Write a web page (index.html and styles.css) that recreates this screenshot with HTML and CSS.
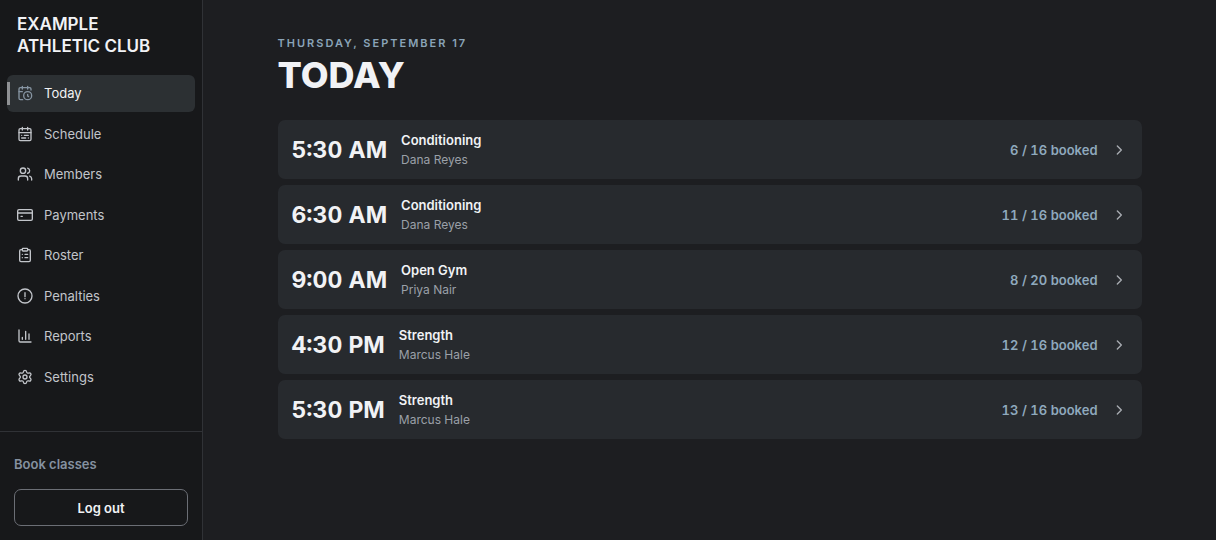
FILE: index.html
```html
<!DOCTYPE html>
<html lang="en">
<head>
  <meta charset="UTF-8">
  <meta name="viewport" content="width=device-width, initial-scale=1.0">
  <title>Today | Example Athletic Club</title>
  <link rel="stylesheet" href="styles.css">
</head>
<body>
  <aside class="sidebar">
    <div class="brand">Example<br>Athletic Club</div>

    <nav class="nav">
      <a href="#today" class="nav-item active" aria-current="page">
        <svg class="icon" viewBox="0 0 24 24"><path d="M21 7.5V6a2 2 0 0 0-2-2H5a2 2 0 0 0-2 2v14a2 2 0 0 0 2 2h3.5"/><path d="M16 2v4M8 2v4M3 10h5"/><circle cx="16" cy="16" r="6"/><path d="M17.5 17.5 16 16.3V14"/></svg>
        Today
      </a>
      <a href="#schedule" class="nav-item">
        <svg class="icon" viewBox="0 0 24 24"><rect x="3" y="4" width="18" height="18" rx="2"/><path d="M16 2v4M8 2v4M3 10h18"/><path d="M17 14h-6M13 18H7M7 14h.01M17 18h.01"/></svg>
        Schedule
      </a>
      <a href="#members" class="nav-item">
        <svg class="icon" viewBox="0 0 24 24"><path d="M16 21v-2a4 4 0 0 0-4-4H6a4 4 0 0 0-4 4v2"/><circle cx="9" cy="7" r="4"/><path d="M16 3.130a4 4 0 0 1 0 7.750M22 21v-2a4 4 0 0 0-3-3.870"/></svg>
        Members
      </a>
      <a href="#payments" class="nav-item">
        <svg class="icon" viewBox="0 0 24 24"><rect x="1" y="4" width="22" height="16" rx="2"/><path d="M1 9h22M6 14h2"/></svg>
        Payments
      </a>
      <a href="#roster" class="nav-item">
        <svg class="icon" viewBox="0 0 24 24"><rect x="8" y="2" width="8" height="4" rx="1"/><path d="M16 4h2a2 2 0 0 1 2 2v14a2 2 0 0 1-2 2H6a2 2 0 0 1-2-2V6a2 2 0 0 1 2-2h2"/><path d="M12 11h4M12 16h4M8 11h.01M8 16h.01"/></svg>
        Roster
      </a>
      <a href="#penalties" class="nav-item">
        <svg class="icon" viewBox="0 0 24 24"><circle cx="12" cy="12" r="10.500"/><path d="M12 7v6M12 16h.01"/></svg>
        Penalties
      </a>
      <a href="#reports" class="nav-item">
        <svg class="icon" viewBox="0 0 24 24"><path d="M3 3v16a2 2 0 0 0 2 2h16"/><path d="M8 17v-3M13 17V5M18 17V9"/></svg>
        Reports
      </a>
      <a href="#settings" class="nav-item">
        <svg class="icon" viewBox="0 0 24 24"><path d="M9.671 4.136a2.340 2.340 0 0 1 4.659 0 2.340 2.340 0 0 0 3.319 1.915 2.340 2.340 0 0 1 2.330 4.033 2.340 2.340 0 0 0 0 3.831 2.340 2.340 0 0 1-2.330 4.033 2.340 2.340 0 0 0-3.319 1.915 2.340 2.340 0 0 1-4.659 0 2.340 2.340 0 0 0-3.320-1.915 2.340 2.340 0 0 1-2.330-4.033 2.340 2.340 0 0 0 0-3.831A2.340 2.340 0 0 1 6.350 6.051a2.340 2.340 0 0 0 3.319-1.915"/><circle cx="12" cy="12" r="3"/></svg>
        Settings
      </a>
    </nav>

    <div class="sidebar-footer">
      <a href="#book" class="book-link">Book classes</a>
      <button type="button" class="logout-btn">Log out</button>
    </div>
  </aside>

  <main class="main">
    <div class="content">
      <p class="date">Thursday, September 17</p>
      <h1>Today</h1>

      <div class="class-list">
        <a href="#class-1" class="class-card">
          <span class="time">5:30 AM</span>
          <span class="info"><span class="name">Conditioning</span><span class="coach">Dana Reyes</span></span>
          <span class="booked">6 / 16 booked</span>
          <svg class="chevron" viewBox="0 0 24 24"><path d="m8 18 6-6-6-6"/></svg>
        </a>
        <a href="#class-2" class="class-card">
          <span class="time">6:30 AM</span>
          <span class="info"><span class="name">Conditioning</span><span class="coach">Dana Reyes</span></span>
          <span class="booked">11 / 16 booked</span>
          <svg class="chevron" viewBox="0 0 24 24"><path d="m8 18 6-6-6-6"/></svg>
        </a>
        <a href="#class-3" class="class-card">
          <span class="time">9:00 AM</span>
          <span class="info"><span class="name">Open Gym</span><span class="coach">Priya Nair</span></span>
          <span class="booked">8 / 20 booked</span>
          <svg class="chevron" viewBox="0 0 24 24"><path d="m8 18 6-6-6-6"/></svg>
        </a>
        <a href="#class-4" class="class-card">
          <span class="time">4:30 PM</span>
          <span class="info"><span class="name">Strength</span><span class="coach">Marcus Hale</span></span>
          <span class="booked">12 / 16 booked</span>
          <svg class="chevron" viewBox="0 0 24 24"><path d="m8 18 6-6-6-6"/></svg>
        </a>
        <a href="#class-5" class="class-card">
          <span class="time">5:30 PM</span>
          <span class="info"><span class="name">Strength</span><span class="coach">Marcus Hale</span></span>
          <span class="booked">13 / 16 booked</span>
          <svg class="chevron" viewBox="0 0 24 24"><path d="m8 18 6-6-6-6"/></svg>
        </a>
      </div>
    </div>
  </main>
</body>
</html>
```

FILE: styles.css
```css
* {
  box-sizing: border-box;
}
body {
  display: flex;
  min-height: 100vh;
  margin: 0;
  background: #1d1e21;
  color: #f1f2f5;
  font-family: Inter, sans-serif;
  font-size: 13px;
}
a {
  color: inherit;
  text-decoration: none;
}

/* sidebar */
.sidebar {
  display: flex;
  flex-direction: column;
  flex: 0 0 203px;
  background: #17181a;
  border-right: 1px solid #303236;
}
.brand {
  padding: 13px 17px 18px;
  font-size: 17px;
  font-weight: 600;
  line-height: 22px;
  text-transform: uppercase;
}
.nav {
  flex: 1;
  display: grid;
  grid-auto-rows: 1fr;
  gap: 4px;
  padding: 0 7px 36px;
}
.nav-item {
  position: relative;
  display: flex;
  align-items: center;
  gap: 11px;
  padding: 0 10px;
  border-radius: 6px;
  color: #c2c5ca;
}
.nav-item.active {
  background: #2c3033;
  color: #f1f2f5;
}
.nav-item.active::before {
  content: "";
  position: absolute;
  left: 0;
  top: 7px;
  bottom: 7px;
  width: 3px;
  background: #8f9194;
}
.icon,
.chevron {
  width: 16px;
  height: 16px;
  fill: none;
  stroke: currentColor;
  stroke-width: 2;
  stroke-linecap: round;
  stroke-linejoin: round;
}
.active .icon {
  color: #8795a3;
}
.sidebar-footer {
  padding: 24px 14px 14px;
  border-top: 1px solid #303236;
}
.book-link {
  display: block;
  margin-bottom: 16px;
  color: #8591a0;
  font-weight: 600;
  line-height: 17px;
}
.logout-btn {
  width: 100%;
  height: 37px;
  border: 1px solid #6b6e75;
  border-radius: 7px;
  background: none;
  color: #f1f2f5;
  font: inherit;
  font-weight: 600;
  cursor: pointer;
}

/* main */
.main {
  flex: 1;
  padding: 34px 24px;
}
.content {
  max-width: 864px;
  margin: 0 auto;
}
.date {
  margin: 0;
  color: #8aa4b8;
  font-size: 11px;
  font-weight: 600;
  line-height: 18px;
  letter-spacing: 2px;
  text-transform: uppercase;
}
h1 {
  margin: 2px 0 24px;
  font-size: 36px;
  font-weight: 800;
  line-height: 42px;
  text-transform: uppercase;
}
.class-list {
  display: flex;
  flex-direction: column;
  gap: 6px;
}
.class-card {
  display: flex;
  align-items: center;
  gap: 14px;
  padding: 10px 14px 9px;
  border-radius: 7px;
  background: #272a2e;
}
.time {
  font-size: 23px;
  font-weight: 700;
  font-variant-numeric: tabular-nums;
}
.info {
  display: flex;
  flex: 1;
  flex-direction: column;
}
.name {
  font-weight: 600;
  line-height: 20px;
}
.coach {
  color: #9ba0a8;
  font-size: 12px;
  line-height: 20px;
}
.booked {
  color: #8fa9bd;
  font-weight: 600;
  font-variant-numeric: tabular-nums;
}
.chevron {
  color: #a9adb3;
}
```
